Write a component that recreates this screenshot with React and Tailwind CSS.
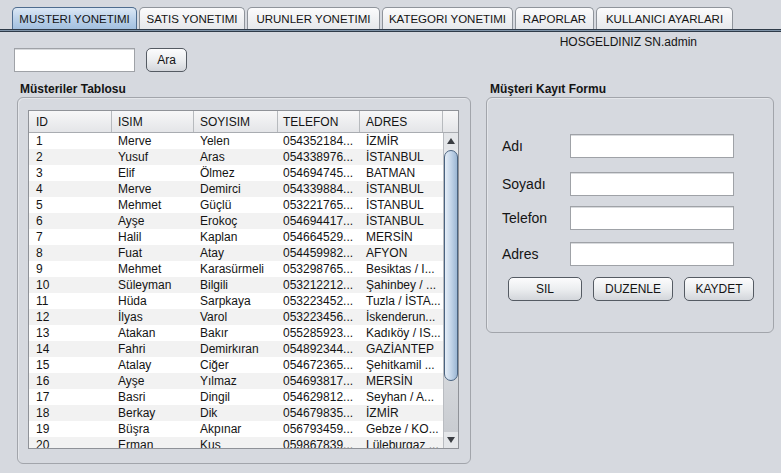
import React from "react";

const rows = [
  ["1", "Merve", "Yelen", "054352184...", "İZMİR"],
  ["2", "Yusuf", "Aras", "054338976...", "İSTANBUL"],
  ["3", "Elif", "Ölmez", "054694745...", "BATMAN"],
  ["4", "Merve", "Demirci", "054339884...", "İSTANBUL"],
  ["5", "Mehmet", "Güçlü", "053221765...", "İSTANBUL"],
  ["6", "Ayşe", "Erokoç", "054694417...", "İSTANBUL"],
  ["7", "Halil", "Kaplan", "054664529...", "MERSİN"],
  ["8", "Fuat", "Atay", "054459982...", "AFYON"],
  ["9", "Mehmet", "Karasürmeli", "053298765...", "Besiktas / I..."],
  ["10", "Süleyman", "Bilgili", "053212212...", "Şahinbey / ..."],
  ["11", "Hüda", "Sarpkaya", "053223452...", "Tuzla / İSTA..."],
  ["12", "İlyas", "Varol", "053223456...", "İskenderun..."],
  ["13", "Atakan", "Bakır", "055285923...", "Kadıköy / IS..."],
  ["14", "Fahri", "Demirkıran", "054892344...", "GAZİANTEP"],
  ["15", "Atalay", "Ciğer", "054672365...", "Şehitkamil ..."],
  ["16", "Ayşe", "Yılmaz", "054693817...", "MERSİN"],
  ["17", "Basri", "Dingil", "054629812...", "Seyhan / A..."],
  ["18", "Berkay", "Dik", "054679835...", "İZMİR"],
  ["19", "Büşra", "Akpınar", "056793459...", "Gebze / KO..."],
  ["20", "Erman", "Kuş", "059867839...", "Lüleburgaz ..."],
];

const colW = ["w-[83px]", "w-[82px]", "w-[84px]", "w-[82px]", "w-[83px]"];
const colPad = ["pl-[7px]", "pl-[6px]", "pl-[6px]", "pl-[5px]", "pl-[6px]"];
const headers = ["ID", "ISIM", "SOYISIM", "TELEFON", "ADRES"];

function Tab({ w, label, selected }) {
  const base =
    "h-[22px] flex items-center justify-center rounded-t-[5px] border border-b-0 text-[11.5px] leading-[14px] whitespace-nowrap " +
    w;
  const look = selected
    ? " border-[#4f6d8f] bg-gradient-to-b from-[#dce8f5] via-[#bcd2ea] to-[#a3c0df]"
    : " border-[#8f949b] bg-gradient-to-b from-[#fbfbfc] to-[#e6e8eb]";
  return <div className={base + look}>{label}</div>;
}

function NButton({ w, children }) {
  return (
    <div
      className={
        "h-[24px] flex items-center justify-center rounded-[5px] border border-[#555b63] bg-gradient-to-b from-[#fcfcfd] via-[#eceef0] to-[#d3d6db] leading-[14px] " +
        w
      }
    >
      {children}
    </div>
  );
}

function Field({ w }) {
  return (
    <div
      className={
        "h-[24px] bg-white border border-[#9fa2a7] shadow-[inset_0_1px_0_#d8dadd] " + w
      }
    />
  );
}

function FormRow({ label, mt }) {
  return (
    <div className={"flex items-center " + mt}>
      <div className="w-[68px] text-[14px] leading-[16px]">{label}</div>
      <Field w="w-[164px]" />
    </div>
  );
}

export default function App() {
  return (
    <div className="w-[781px] h-[473px] overflow-hidden bg-[#d6d9df] text-[12px] text-[#141414] font-['Liberation_Sans',Arial,sans-serif] flex flex-col">
      {/* Tabs */}
      <div className="flex items-end pt-[7px] pl-[12px] gap-[2px] h-[29px]">
        <Tab w="w-[125px]" label="MUSTERI YONETIMI" selected />
        <Tab w="w-[106px]" label="SATIS YONETIMI" />
        <Tab w="w-[133px]" label="URUNLER YONETIMI" />
        <Tab w="w-[131px]" label="KATEGORI YONETIMI" />
        <Tab w="w-[79px]" label="RAPORLAR" />
        <Tab w="w-[137px]" label="KULLANICI AYARLARI" />
      </div>
      <div className="h-[1px] bg-[#2f3b49]" />
      <div className="h-[1px] bg-[#7f93a8]" />
      <div className="h-[1px] bg-[#2f3b49]" />

      {/* Search row */}
      <div className="flex items-start justify-between h-[40px]">
        <div className="flex items-start pt-[16px] pl-[14px] gap-[11px]">
          <Field w="w-[121px]" />
          <NButton w="w-[41px]">Ara</NButton>
        </div>
        <div className="pt-[3px] pr-[84px] leading-[14px]">HOSGELDINIZ SN.admin</div>
      </div>

      {/* Panels */}
      <div className="flex items-start pl-[17px] gap-[15px]">
        {/* Left: table */}
        <div className="flex flex-col w-[454px]">
          <div className="h-[14px] leading-[14px] mt-[10px] pl-[3px] font-bold">Müsteriler Tablosu</div>
          <div className="mt-[1px] h-[367px] border border-[#a2a5ab] rounded-[6px] pt-[12px] pl-[10px] shadow-[inset_1px_1px_0_#e4e6ea]">
            <div className="w-[431px] h-[339px] border border-[#8f9298] flex flex-col bg-white">
              {/* header */}
              <div className="flex h-[22px] border-b border-[#a9acb1] bg-gradient-to-b from-[#f7f7f8] to-[#e4e5e8]">
                {headers.map((h, i) => (
                  <div
                    key={h}
                    className={
                      "h-full border-r border-[#b7babe] pt-[2px] leading-[19px] " + colW[i] + " " + colPad[i]
                    }
                  >
                    {h}
                  </div>
                ))}
                <div className="w-[15px] h-full" />
              </div>
              {/* body */}
              <div className="flex h-[315px]">
                <div className="w-[414px] h-full overflow-hidden">
                  {rows.map((r, ri) => (
                    <div
                      key={ri}
                      className={
                        "flex h-[16px] pt-[1px] leading-[15px] " +
                        (ri % 2 === 1 ? "bg-[#f2f2f2]" : "bg-white")
                      }
                    >
                      {r.map((c, ci) => (
                        <div
                          key={ci}
                          className={"whitespace-nowrap overflow-hidden " + colW[ci] + " " + colPad[ci]}
                        >
                          {c}
                        </div>
                      ))}
                    </div>
                  ))}
                </div>
                {/* scrollbar */}
                <div className="w-[15px] h-full flex flex-col bg-[#e4e6e9] border-l border-[#b9bcc1]">
                  <div className="h-[16px] flex items-center justify-center">
                    <div className="w-0 h-0 border-l-[4px] border-r-[4px] border-b-[6px] border-l-transparent border-r-transparent border-b-[#3a3d42]" />
                  </div>
                  <div className="flex-1 flex flex-col bg-gradient-to-b from-[#e6e8eb] via-[#e6e8eb] to-[#c9ccd1]">
                    <div className="mt-[1px] h-[231px] rounded-[7px] border border-[#4a6380] bg-gradient-to-r from-[#e6eef7] via-[#c3d5e9] to-[#9cb7d4]" />
                  </div>
                  <div className="h-[16px] flex items-center justify-center">
                    <div className="w-0 h-0 border-l-[4px] border-r-[4px] border-t-[6px] border-l-transparent border-r-transparent border-t-[#3a3d42]" />
                  </div>
                </div>
              </div>
            </div>
          </div>
        </div>

        {/* Right: form */}
        <div className="flex flex-col w-[288px]">
          <div className="h-[14px] leading-[14px] mt-[10px] pl-[4px] font-bold">Müşteri Kayıt Formu</div>
          <div className="mt-[1px] h-[236px] border border-[#a2a5ab] rounded-[6px] pt-[36px] pl-[15px] flex flex-col shadow-[inset_1px_1px_0_#e4e6ea]">
            <FormRow label="Adı" mt="" />
            <FormRow label="Soyadı" mt="mt-[14px]" />
            <FormRow label="Telefon" mt="mt-[10px]" />
            <FormRow label="Adres" mt="mt-[12px]" />
            <div className="flex mt-[11px] pl-[6px] gap-[11px]">
              <NButton w="w-[74px]">SIL</NButton>
              <NButton w="w-[80px]">DUZENLE</NButton>
              <NButton w="w-[70px]">KAYDET</NButton>
            </div>
          </div>
        </div>
      </div>
    </div>
  );
}
